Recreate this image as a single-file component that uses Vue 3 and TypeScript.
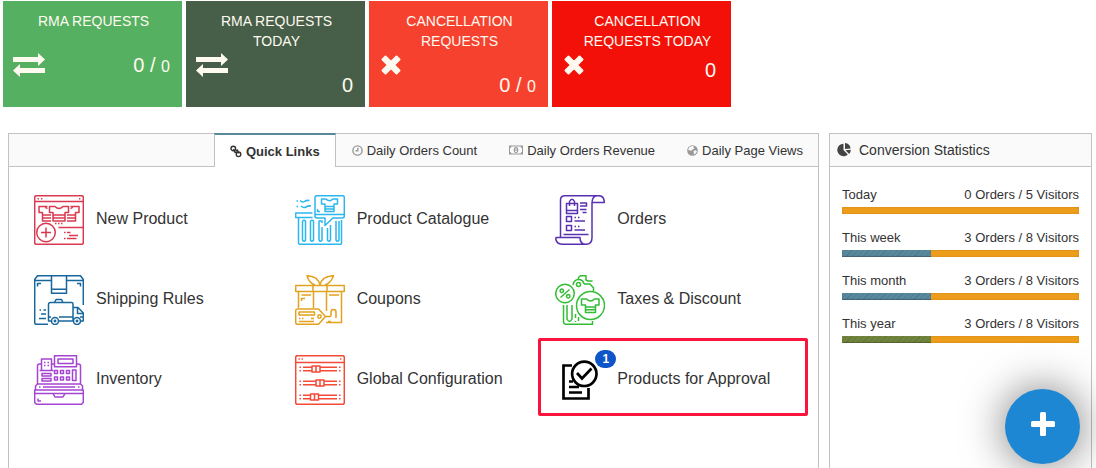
<script setup lang="ts">
import { ref } from 'vue'

interface Counter {
  title: string
  value: string
  small?: string
  tone: string
  icon: 'exchange' | 'cross'
}

interface QuickLink {
  label: string
  color: string
  path: string
  badge?: number
}

interface Stat {
  label: string
  orders: number
  visitors: number
  share: number
  tone: string
}

const circle = (x: number, y: number, r: number): string =>
  `M${x - r} ${y}a${r} ${r} 0 1 0 ${2 * r} 0a${r} ${r} 0 1 0 ${-2 * r} 0`

const box = (x: number, y: number, w: number, h: number): string =>
  `M${x} ${y}h${w}v${h}h${-w}z`

const frame = 'M2.500.7H47.500Q49.300.7 49.300 2.500V47.500Q49.300 49.300 47.500 49.300H2.500Q.7 49.300.7 47.500V2.500Q.7.7 2.500.7'

const counters: Counter[] = [
  { title: 'RMA REQUESTS', value: '0 / ', small: '0', tone: 'green', icon: 'exchange' },
  { title: 'RMA REQUESTS TODAY', value: '0', tone: 'forest', icon: 'exchange' },
  { title: 'CANCELLATION REQUESTS', value: '0 / ', small: '0', tone: 'coral', icon: 'cross' },
  { title: 'CANCELLATION REQUESTS TODAY', value: '0', tone: 'red', icon: 'cross' },
]

const tabs = [
  { id: 'links', label: 'Quick Links' },
  { id: 'count', label: 'Daily Orders Count' },
  { id: 'revenue', label: 'Daily Orders Revenue' },
  { id: 'views', label: 'Daily Page Views' },
]
const activeTab = ref('links')

const newProduct = [
  frame,
  'M.7 6.500H49.300M3.500 3.700h1.400M7 3.700h1.400M45 3.700h1.400',
  'M15.500 11.500H21Q25 15.500 29 11.500H34.500V17.500H31V26H19V17.500H15.500ZM19 20H31M19 23H31',
  'M13.500 11.500H5V17.500H8.500V26H17M8.500 20H17M8.500 23H17M11 11.500q1 2 2.500 2',
  'M36.500 11.500H45V17.500H41.500V26H33M41.500 20H33M41.500 23H33M39 11.500q-1 2-2.500 2',
  circle(12, 37.5, 9.3),
  'M12 32.500v10M7 37.500h10M24.500 32.500H49M21 28.500h1.500M24 28.500h1.500M27 28.500h1.500',
  'M30 37.500h1.500M33 37.500h3.500M35 40.500h9M30 43.500h1.500M33 43.500h9.500',
].join('')

const catalogue = [
  'M22 .7H47.500Q49.300.7 49.300 2.500V21Q49.300 23 47.500 23H38L30 30.500V23H22Q20 23 20 21V2.500Q20 .7 22 .7M20 19.500H49.300',
  'M26.500 4H31Q34.500 7.500 38 4H42.500V9H39V16.500H30V9H26.500ZM30 11.500H39M30 14H39M22.500 14V16.500H25',
  'M1.500 6h1.500M5 5.500q2.500 2.500 4.500 1t5-1M1.500 11.500h1.500M6 11q2.500 2.500 5 1t5-1',
  'M17.500 18H.7V22.500H17.500M3.500 22.500V48Q3.500 49.300 5 49.300H45.500Q46.500 49.300 46.500 48V25',
  'M7.500 26V45q1.500 2.500 3 0V26q-1.500-1.500-3 0M15.500 26V45q1.500 2.500 3 0V26q-1.500-1.500-3 0',
  'M27 28V26H24V45q1.500 2.500 3 0V32M32.500 33V45q1.500 2.500 3 0V30M41 26V45q1.500 2.500 3 0V26',
].join('')

const orders = [
  'M5.500 42V5Q5.500.7 10 .7H44Q49.300 1 49.300 7.500H37Q37 .7 43 .7M37 7.500V43',
  'M.7 42.500H25Q25 49.300 31 49.300H8Q.7 49.300.7 42.500M31 49.300Q37 49.300 37 42.500M8.500 39.500H33.500',
  'M11.500 8.500H22.500V18.500H11.500ZM11.500 15.500H22.500M14.500 11V6.500Q17 2 19.500 6.500V11',
  'M25 8H31.500V11H25M25 14.500H31.500M27.500 17.500H31.500',
  box(11.5, 21.5, 5, 5),
  box(11.5, 30.5, 5, 5),
  'M19.500 22.500h1.500M23 22.500h1.500M19.500 26H30M19.500 31.500h1.500M23 31.500h1.500M19.500 35H30',
].join('')

const shipping = [
  'M14 49.300H2.500Q.7 49.300.7 47.500V4.500L3.500.7H46.500L49.300 4.500V30M.7 5.500H17M33 5.500H49.300',
  'M17.500.7V18.300H32.500V.7M17.500 14.300H32.500M3.500 11.500V8.500H7M43 8.500H46.500V11.500',
  'M17 46H14.500V29.500Q14.500 27.500 16.500 27.500H37.500Q39 27.500 39 29.500V46H25M20.500 27.500L22 24.500H27.500L29 27.500',
  'M39 32.500H44L49.300 38V46H47M43.500 32.500V38.500H49M46 42H49.300M14.500 42H17M25 42H39',
  circle(21, 46, 3.5),
  circle(21, 46, 0.7),
  circle(43, 46, 3.5),
  circle(43, 46, 0.7),
  'M5.500 35H7M9.500 35H12M7 39H12M5 43.500H12',
].join('')

const coupons = [
  'M25 10Q23 1 12 .7Q14 8 20 10M25 10Q27 1 38.500.7Q36 8 30 10',
  'M.7 10.500H49.300V16.500H.7ZM18 10.500V16.500M32 10.500V16.500M3.500 16.500V33M46.500 16.500V47.500H31M18.500 16.500V33M31.500 16.500V36',
  'M6.500 26V23.500H10M6.500 20H16M34 20H44',
  'M2.500 34H23.500L30.500 41.500L23.500 49.300H2.500Q.7 49.300.7 47.500V36Q.7 34 2.500 34',
  box(4, 37, 15.5, 3),
  circle(24.5, 41.5, 1.7),
  'M4 43.500h1.500M7 43.500h1.500M16 43.500h3M4 46.500h15M31 41.500H35Q36 41.500 36 40V37Q36 34.500 38.500 34.500T41 37V43M33 46.500h3',
].join('')

const taxes = [
  circle(10, 18.5, 9.3),
  circle(6.8, 15.8, 1.7),
  circle(13.2, 21.3, 1.7),
  'M5.500 22.500L14.500 14.500',
  circle(35.5, 30.5, 14),
  'M26.500 24H31.500Q35.500 28 39.500 24H44V30H40.500V37.500H30.500V30H26.500ZM30.500 32H40.500M30.500 34.700H40.500',
  'M23.500 4.500V2.500L25.500.7H31V5L33 6H37.500M29 9H35L38.500 13V16.500M18 10Q19 4.500 23.500 4.500T29 9',
  circle(23.5, 9.5, 2),
  'M8.500 30V47Q8.500 49.300 11 49.300H37.500V46M12 30V44Q14.500 49 17 44V30M20.500 39V43M20.500 46V47M23.500 42V46',
].join('')

const inventory = [
  box(20.5, 0.7, 22, 11),
  box(24, 4, 15, 4.5),
  'M20.500 9H18M42.500 9H44.500Q46.500 9 46.500 11V29M7.500 9H5.500Q3.500 9 3.500 11V29',
  'M7.500 15.500V4H17.500V15.500M10 7.500h1.500M13.500 7.500h1.500M10 10.500h1.500M13.500 10.500h1.500M5.500 15.500H19.500',
  'M3.500 29H46.500L48.500 31V35H1.500V31ZM5 32h1.500M9 32H41M44 32h1.500',
  'M.7 35H49.300V47.500L47.500 49.300H2.500L.7 47.500ZM.7 38.500H49M19 38.500L21 42H29L31 38.500M4 43.500V46H7',
  box(8, 18.5, 9, 2.5),
  box(8, 23.5, 9, 2.5),
  box(20.5, 15.5, 3, 3),
  box(26.5, 15.5, 3, 3),
  box(32.5, 15.5, 3, 3),
  box(20.5, 22, 3, 3),
  box(26.5, 22, 3, 3),
  box(32.5, 22, 3, 3),
  box(38.5, 15, 3.5, 10.5),
].join('')

const slider = (y: number, x: number): string =>
  [
    `M4.500 ${y - 1.7}h1.500M4.500 ${y + 1.7}h1.500M44 ${y - 1.7}h1.500M44 ${y + 1.7}h1.500`,
    `M8 ${y - 1.7}H${x}M8 ${y + 1.7}H${x}M${x + 8} ${y - 1.7}H42M${x + 8} ${y + 1.7}H42`,
    box(x, y - 3, 8, 6),
    `M${x + 4} ${y - 3}v6`,
  ].join('')

const configuration = [
  frame,
  'M.7 7.500H49.300M3.500 4h1.400M6.500 4h1.400M45 4h1.400',
  slider(14, 17),
  slider(28, 21),
  slider(42, 15.5),
].join('')

const approval = [
  'M17 10.500H8.500V43.500H33.500V33M14 26.500H18M14 32H24M14 37.500H27',
  circle(29.3, 18.8, 12.2),
  'M22 18L27 23.500L36.500 13.500',
].join('')

const links: QuickLink[] = [
  { label: 'New Product', color: 'crimson', path: newProduct },
  { label: 'Product Catalogue', color: 'sky', path: catalogue },
  { label: 'Orders', color: 'violet', path: orders },
  { label: 'Shipping Rules', color: 'ocean', path: shipping },
  { label: 'Coupons', color: 'gold', path: coupons },
  { label: 'Taxes & Discount', color: 'leaf', path: taxes },
  { label: 'Inventory', color: 'purple', path: inventory },
  { label: 'Global Configuration', color: 'tomato', path: configuration },
  { label: 'Products for Approval', color: 'black', path: approval, badge: 1 },
]

const stats: Stat[] = [
  { label: 'Today', orders: 0, visitors: 5, share: 0, tone: 'blue' },
  { label: 'This week', orders: 3, visitors: 8, share: 37.5, tone: 'blue' },
  { label: 'This month', orders: 3, visitors: 8, share: 37.5, tone: 'blue' },
  { label: 'This year', orders: 3, visitors: 8, share: 37.5, tone: 'olive' },
]
</script>

<template>
  <main class="page">
    <section class="counters">
      <article v-for="c in counters" :key="c.title" class="counter" :class="c.tone">
        <h2 class="counter-title">{{ c.title }}</h2>
        <svg v-if="c.icon === 'exchange'" class="counter-icon" width="32" height="24" viewBox="0 0 32 24" aria-hidden="true">
          <path d="M0 4h25V0l7 6.500-7 6.500V9H0zM32 15H7v-4l-7 6.500L7 24v-4h25z" />
        </svg>
        <svg v-else class="counter-icon cross" width="24" height="24" viewBox="0 0 24 24" aria-hidden="true">
          <path d="M6.500 3.500L12 9l5.500-5.500 3 3L15 12l5.500 5.500-3 3L12 15l-5.500 5.500-3-3L9 12 3.500 6.500z" />
        </svg>
        <p class="counter-value">{{ c.value }}<small v-if="c.small">{{ c.small }}</small></p>
      </article>
    </section>

    <div class="panels">
      <section class="panel">
        <div class="panel-head tabs" role="tablist">
          <button
            v-for="t in tabs"
            :key="t.id"
            type="button"
            role="tab"
            class="tab"
            :class="{ active: activeTab === t.id }"
            :aria-selected="activeTab === t.id"
            @click="activeTab = t.id"
          >
            <svg v-if="t.id === 'links'" class="line" width="12" height="13" viewBox="0 0 12 13" aria-hidden="true">
              <circle cx="3.300" cy="3.500" r="2.300" />
              <circle cx="8.500" cy="9.300" r="2.300" />
              <path d="M3.500 4l1.500 3.500 2-.5M5.500 5.500l2-.5 1 3.500" />
            </svg>
            <svg v-else-if="t.id === 'count'" class="line" width="11" height="11" viewBox="0 0 11 11" aria-hidden="true">
              <circle cx="5.500" cy="5.500" r="4.600" />
              <path d="M5.800 2.800v3H3.500" />
            </svg>
            <svg v-else-if="t.id === 'revenue'" width="14" height="10" viewBox="0 0 14 10" aria-hidden="true">
              <path fill-rule="evenodd" d="M0 .5h14v9H0zM2.500 1.500Q2.300 2.800 1 3v4q1.300.2 1.500 1.500h9Q11.700 7.200 13 7V3q-1.300-.2-1.500-1.500zM7 2q2.300 0 2.300 3T7 8 4.700 5 7 2m-.8 1.300v.9h.4v2H6v.8h2v-.8h-.5V3.300z" />
            </svg>
            <svg v-else width="11" height="11" viewBox="0 0 11 11" aria-hidden="true">
              <circle cx="5.500" cy="5.500" r="5.300" />
              <path class="land" d="M5 1l2 .3-.8 1.200 1.300.5L6 4.500l-1 .2L4 6 2.500 5 1.300 5.500Q1 3.500 2.500 2zM6.500 6l2-.7 1.500.8-1 2-2 1.700z" />
            </svg>
            <span>{{ t.label }}</span>
          </button>
        </div>
        <nav class="links" aria-label="Quick Links">
          <a v-for="l in links" :key="l.label" href="#" class="link" :class="{ highlighted: l.badge }">
            <svg class="link-icon" :class="l.color" width="50" height="50" viewBox="0 0 50 50" aria-hidden="true">
              <path :d="l.path" />
            </svg>
            <span v-if="l.badge" class="badge">{{ l.badge }}</span>
            <span class="link-label">{{ l.label }}</span>
          </a>
        </nav>
      </section>

      <section class="panel">
        <header class="panel-head stats-head">
          <svg width="14" height="14" viewBox="0 0 14 14" aria-hidden="true">
            <path d="M6.500.8V7l4.300 4.500A6.200 6.200 0 1 1 6.500.8M8 0q5.200.5 5.500 5.500L8 6zM8.500 7.300l5.300-.5q0 2.500-1.600 4.200z" />
          </svg>
          <h2 class="stats-title">Conversion Statistics</h2>
        </header>
        <div class="stats">
          <div v-for="s in stats" :key="s.label" class="stat">
            <div class="stat-text">
              <span>{{ s.label }}</span>
              <span>{{ s.orders }} Orders / {{ s.visitors }} Visitors</span>
            </div>
            <div class="bar">
              <div class="fill" :class="s.tone" :style="{ width: s.share + '%' }"></div>
            </div>
          </div>
        </div>
      </section>
    </div>

    <button type="button" class="fab" aria-label="Add">
      <svg width="26" height="26" viewBox="0 0 26 26" aria-hidden="true">
        <rect x="1" y="10" width="24" height="6" rx="1.500" />
        <rect x="10" y="1" width="6" height="24" rx="1.500" />
      </svg>
    </button>
  </main>
</template>

<style>
body {
  margin: 0;
  background: #fff;
}
</style>

<style scoped>
.page {
  box-sizing: border-box;
  min-height: 100vh;
  padding-top: 1px;
  display: flex;
  flex-direction: column;
  gap: 26px;
  font-family: 'Liberation Sans', Arial, sans-serif;
  color: #333;
}

.counters {
  display: grid;
  grid-template-columns: repeat(4, minmax(0, 1fr));
  gap: 4px;
  max-width: 728px;
  margin: 0 3px;
}

.counter {
  box-sizing: border-box;
  min-height: 106px;
  padding: 10px 12px 8px 10px;
  display: grid;
  grid-template-columns: auto 1fr;
  align-content: start;
  color: #fffaf0;
}

.green { background: #56b062; }
.forest { background: #475f48; }
.coral { background: #f7412f; }
.red { background: #f31008; }

.counter-title {
  grid-area: 1 / 1 / 2 / 3;
  margin: 0;
  padding-left: 4px;
  text-align: center;
  font-size: 14px;
  font-weight: 400;
  line-height: 20px;
}

.red .counter-title {
  padding-left: 14px;
}

.counter-icon {
  grid-area: 1 / 1 / 3 / 2;
  margin-top: 42px;
  fill: #fffaf0;
}

.counter-icon.cross {
  stroke: #fffaf0;
  stroke-width: 2;
  stroke-linejoin: round;
}

.counter-value {
  grid-area: 2 / 2 / 3 / 3;
  margin: 24px 0 0;
  text-align: right;
  font-size: 20px;
  line-height: 20px;
}

.counter-value small {
  font-size: 16px;
}

.red .counter-value {
  margin: 9px 3px 0 0;
}

.panels {
  flex: 1;
  display: grid;
  grid-template-columns: minmax(0, 811fr) minmax(0, 263fr);
  gap: 10px;
  padding: 0 4px 0 8px;
}

.panel {
  border: 1px solid #c2c2c2;
  border-bottom: 0;
}

.panel-head {
  box-sizing: border-box;
  height: 33px;
  background: #fafafa;
  border-bottom: 1px solid #c2c2c2;
  display: flex;
}

.tabs {
  justify-content: flex-end;
}

.tab {
  display: flex;
  align-items: center;
  gap: 4px;
  padding: 0 16px;
  border: 0;
  background: none;
  font: 13px 'Liberation Sans', Arial, sans-serif;
  color: #333;
  cursor: pointer;
}

.tab:last-child {
  padding-right: 15px;
}

.tab svg {
  fill: #999;
}

.tab svg.line {
  fill: none;
  stroke: #999;
  stroke-width: 1.400;
}

.tab.active svg.line {
  stroke: #333;
}

.tab svg .land {
  fill: #fafafa;
}

.tab.active {
  margin: -1px 0;
  padding: 0 15px;
  border: 1px solid #c2c2c2;
  border-top: 2px solid #57889c;
  border-bottom: 0;
  background: #fff;
  font-weight: 700;
}

.links {
  display: grid;
  grid-template-columns: repeat(3, minmax(0, 1fr));
  row-gap: 30px;
  padding: 28px 2px 28px 25px;
}

.link {
  position: relative;
  display: flex;
  align-items: center;
  gap: 12px;
  font-size: 16px;
  line-height: 20px;
  color: #333;
  text-decoration: none;
}

.link-label {
  padding-bottom: 2px;
}

.link-icon {
  flex: none;
  fill: none;
  stroke: currentColor;
  stroke-width: 1.500;
  stroke-linejoin: round;
}

.crimson { color: #d93a50; }
.sky { color: #2bb7ee; }
.violet { color: #5a30b0; }
.ocean { color: #17679c; }
.gold { color: #e3a21e; }
.leaf { color: #33bd35; }
.purple { color: #a544d2; }
.tomato { color: #f44a38; }
.black {
  color: #000;
  stroke-width: 2.700;
  stroke-linejoin: miter;
}

.highlighted::before {
  content: '';
  position: absolute;
  inset: -17px 8px -11px -17px;
  border: 3px solid #f9143c;
  border-radius: 2px;
}

.badge {
  position: absolute;
  left: 40px;
  top: -5px;
  width: 21px;
  border-radius: 9px;
  background: #0d55c8;
  color: #fff;
  font-size: 12px;
  font-weight: 700;
  line-height: 18px;
  text-align: center;
}

.stats-head {
  align-items: center;
  gap: 8px;
  padding: 0 7px;
}

.stats-head svg {
  fill: #444;
}

.stats-title {
  margin: 0;
  font-size: 14px;
  font-weight: 400;
}

.stats {
  display: grid;
  gap: 16px;
  padding: 20px 12px;
}

.stat-text {
  display: flex;
  justify-content: space-between;
  padding-bottom: 4px;
  font-size: 13px;
  line-height: 16px;
}

.bar {
  height: 7px;
  background: #ed9c1b;
  box-shadow: inset 0 0 2px #c98212;
}

.fill {
  height: 100%;
  box-shadow: inset 0 -1px 1px rgba(0, 0, 0, 0.25);
}

.fill.blue {
  background: repeating-linear-gradient(135deg, #57889c 0 3px, #4e7d91 3px 4px);
}

.fill.olive {
  background: repeating-linear-gradient(135deg, #71843f 0 3px, #667a34 3px 4px);
}

.fab {
  position: fixed;
  right: 16px;
  bottom: 4px;
  width: 75px;
  height: 75px;
  padding: 0 0 6px;
  border: 0;
  border-radius: 50%;
  background: #1d87d4;
  box-shadow: 0 0 44px rgba(0, 0, 0, 0.55);
  display: flex;
  align-items: center;
  justify-content: center;
  cursor: pointer;
}

.fab svg {
  fill: #fff;
}
</style>
